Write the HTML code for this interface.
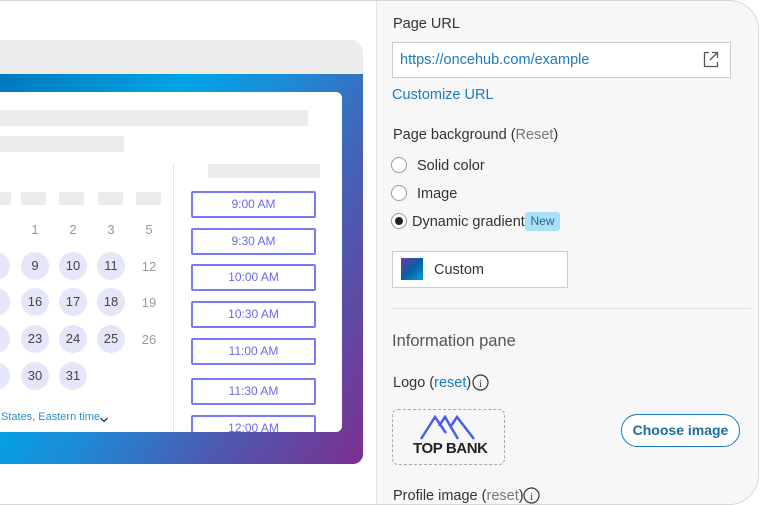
<!DOCTYPE html>
<html><head><style>
*{box-sizing:border-box;margin:0;padding:0}
body{width:760px;height:505px;overflow:hidden;background:#fff;font-family:"Liberation Sans",sans-serif;position:relative}
.frame{position:absolute;left:-1px;top:0;width:760px;height:505px;border:1px solid #d6d6d6;border-radius:0 30px 30px 0;overflow:hidden;background:#fff}
.a{position:absolute}
.right{position:absolute;left:376px;top:0;width:384px;height:505px;background:#f7f7f7;border-left:1px solid #e2e2e2}
.bar{position:absolute;background:#ececec}
.circ{position:absolute;width:28px;height:28px;border-radius:50%;background:#e6e6fb;color:#444;font-size:13px;text-align:center;line-height:28px}
.num{position:absolute;color:#999;font-size:13px;width:28px;text-align:center}
.slot{position:absolute;left:191px;width:125px;height:27px;border:2px solid #7a7af2;border-radius:2px;color:#6b6bea;font-size:12px;text-align:center;line-height:23px}
.t{position:absolute;font-size:14.5px;color:#333}
.radio{position:absolute;left:391px;width:16px;height:16px;border:1px solid #999;border-radius:50%;background:#fff}
</style></head><body>
<div class="frame">
<div class="a" style="left:0;top:39px;width:363px;height:34px;background:#ececec;border-radius:0 12px 0 0"></div>
<div class="a" style="left:0;top:73px;width:363px;height:390px;border-radius:0 0 10px 0;background:linear-gradient(120deg,#0078be 0%,#00a4e6 32%,#1e8ad6 50%,#4a5cb2 72%,#7d2f90 100%)"></div>
<div class="a" style="left:0;top:91px;width:342px;height:340px;background:#fff;border-radius:0 6px 6px 0;overflow:hidden">
 <div class="bar" style="left:0;top:18px;width:308px;height:16px"></div>
 <div class="bar" style="left:0;top:44px;width:124px;height:16px"></div>
 <div class="a" style="left:173px;top:71px;width:1px;height:270px;background:#e6e6e6"></div>
 <div class="bar" style="left:208px;top:72px;width:112px;height:14px"></div>
 <div class="bar" style="left:0;top:100px;width:11px;height:13px"></div>
 <div class="bar" style="left:21px;top:100px;width:25px;height:13px"></div>
 <div class="bar" style="left:59px;top:100px;width:25px;height:13px"></div>
 <div class="bar" style="left:98px;top:100px;width:25px;height:13px"></div>
 <div class="bar" style="left:136px;top:100px;width:25px;height:13px"></div>
 <div class="num" style="left:21px;top:130px">1</div><div class="num" style="left:59px;top:130px">2</div><div class="num" style="left:97px;top:130px">3</div><div class="num" style="left:135px;top:130px">5</div>
 <div class="circ" style="left:-18px;top:160px"></div><div class="circ" style="left:21px;top:160px">9</div><div class="circ" style="left:59px;top:160px">10</div><div class="circ" style="left:97px;top:160px">11</div><div class="num" style="left:135px;top:167px">12</div>
 <div class="circ" style="left:-18px;top:196px"></div><div class="circ" style="left:21px;top:196px">16</div><div class="circ" style="left:59px;top:196px">17</div><div class="circ" style="left:97px;top:196px">18</div><div class="num" style="left:135px;top:203px">19</div>
 <div class="circ" style="left:-18px;top:233px"></div><div class="circ" style="left:21px;top:233px">23</div><div class="circ" style="left:59px;top:233px">24</div><div class="circ" style="left:97px;top:233px">25</div><div class="num" style="left:135px;top:240px">26</div>
 <div class="circ" style="left:-18px;top:270px"></div><div class="circ" style="left:21px;top:270px">30</div><div class="circ" style="left:59px;top:270px">31</div>
 <div class="a" style="left:1px;top:319px;font-size:11px;color:#2a8cc8">States, Eastern time</div>
 <svg class="a" style="left:99px;top:324px" width="10" height="8"><path d="M1.5 2l3.5 3.5L8.5 2" fill="none" stroke="#333" stroke-width="1.3"/></svg>
 <div class="slot" style="top:99px">9:00 AM</div>
 <div class="slot" style="top:136px">9:30 AM</div>
 <div class="slot" style="top:172px">10:00 AM</div>
 <div class="slot" style="top:209px">10:30 AM</div>
 <div class="slot" style="top:246px">11:00 AM</div>
 <div class="slot" style="top:286px">11:30 AM</div>
 <div class="slot" style="top:323px">12:00 AM</div>
</div>
<div class="right"></div>
<div class="t" style="left:393px;top:15px">Page URL</div>
<div class="a" style="left:392px;top:41px;width:339px;height:36px;background:#fff;border:1px solid #ccc"></div>
<div class="t" style="left:400px;top:51px;color:#1a7bbf">https://oncehub.com/example</div>
<svg class="a" style="left:703px;top:50px" width="16" height="17" viewBox="0 0 16 17"><path d="M6 1.5H1.5v14h13V11M9 1.5h5.5V7M14.5 1.5L7 9" fill="none" stroke="#555" stroke-width="1.3"/></svg>
<div class="t" style="left:392px;top:86px;color:#1a7bbf">Customize URL</div>
<div class="t" style="left:393px;top:126px">Page background (<span style="color:#777">Reset</span>)</div>
<div class="radio" style="top:156px"></div><div class="t" style="left:417px;top:157px">Solid color</div>
<div class="radio" style="top:184px"></div><div class="t" style="left:417px;top:185px">Image</div>
<div class="radio" style="top:212px"><div class="a" style="left:3px;top:3px;width:8px;height:8px;border-radius:50%;background:#222"></div></div>
<div class="t" style="left:412px;top:213px">Dynamic gradient</div>
<div class="a" style="left:525px;top:211px;width:35px;height:19px;background:#aadff5;border-radius:3px;color:#1a6e9a;font-size:12px;text-align:center;line-height:19px">New</div>
<div class="a" style="left:392px;top:250px;width:176px;height:37px;background:#fff;border:1px solid #ccc"></div>
<div class="a" style="left:401px;top:257px;width:22px;height:22px;background:linear-gradient(135deg,#6a3aa0,#0a5e9e 50%,#00a0e0)"></div>
<div class="t" style="left:434px;top:261px">Custom</div>
<div class="a" style="left:392px;top:307px;width:359px;height:1px;background:#ddd"></div>
<div class="a" style="left:392px;top:331px;font-size:16.5px;color:#555">Information pane</div>
<div class="t" style="left:393px;top:374px">Logo (<span style="color:#1a7bbf">reset</span>)</div>
<svg class="a" style="left:472px;top:373px" width="17" height="17"><circle cx="8.5" cy="8.5" r="7.5" fill="none" stroke="#333" stroke-width="1.2"/><text x="8.5" y="13" font-size="10" text-anchor="middle" font-family="Liberation Serif" fill="#333">i</text></svg>
<div class="a" style="left:392px;top:408px;width:113px;height:56px;border:1px dashed #aaa;border-radius:6px"></div>
<svg class="a" style="left:418px;top:412px" width="60" height="28"><path d="M3 26L17 4l11 16M21 13l6-9 13 22M33 13l6-9 17 22" fill="none" stroke="#4a5cf0" stroke-width="2.5"/></svg>
<div class="a" style="left:413px;top:439px;font-size:15px;font-weight:bold;color:#222;letter-spacing:-.4px">TOP BANK</div>
<div class="a" style="left:621px;top:413px;width:119px;height:33px;border:1.5px solid #1a7bbf;border-radius:17px;background:#fff;color:#1a6e9f;font-weight:bold;font-size:14px;text-align:center;line-height:30px">Choose image</div>
<div class="t" style="left:393px;top:487px">Profile image (<span style="color:#777">reset</span>)</div>
<svg class="a" style="left:523px;top:486px" width="17" height="17"><circle cx="8.5" cy="8.5" r="7.5" fill="none" stroke="#333" stroke-width="1.2"/><text x="8.5" y="13" font-size="10" text-anchor="middle" font-family="Liberation Serif" fill="#333">i</text></svg>
</div>
</body></html>
